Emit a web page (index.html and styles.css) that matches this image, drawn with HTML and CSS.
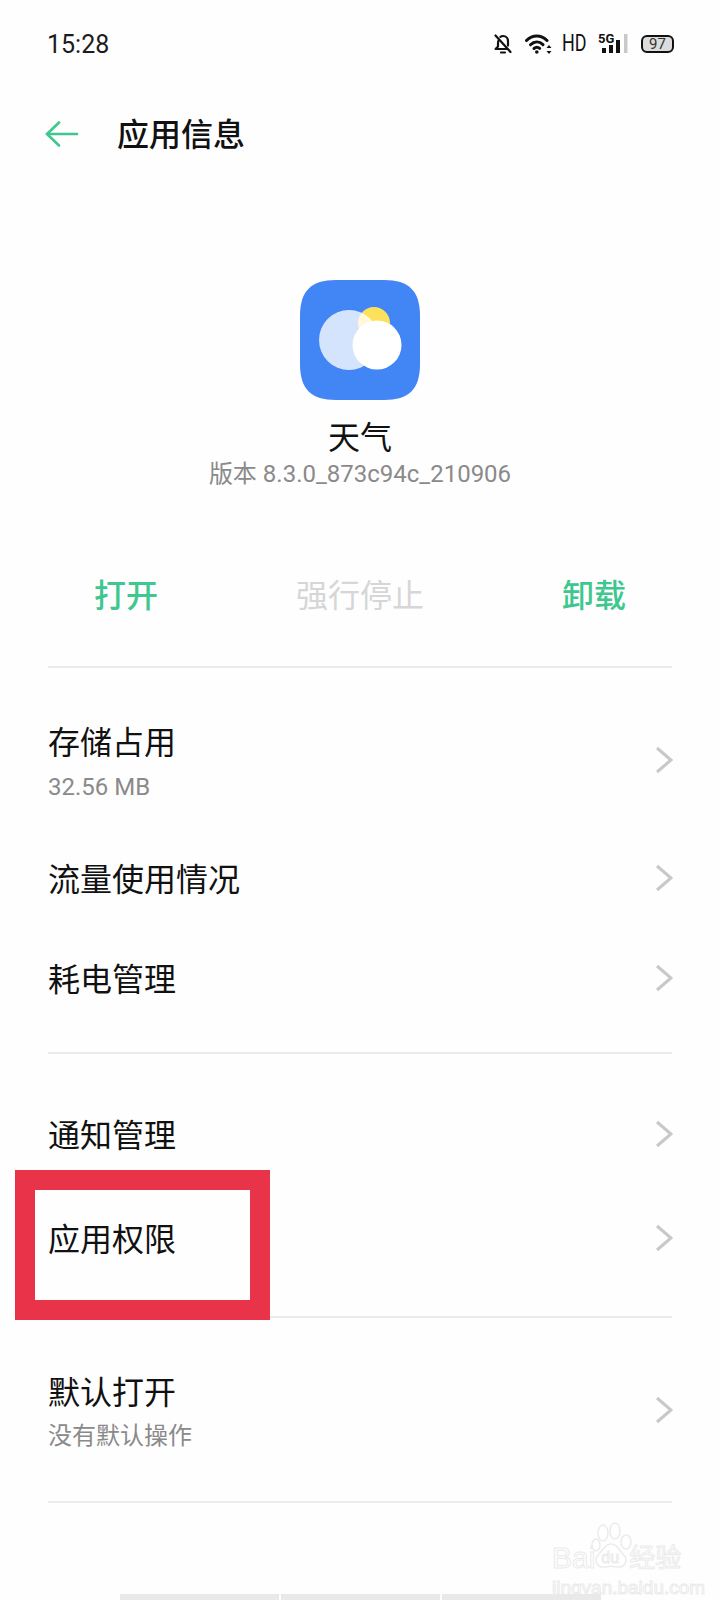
FILE: index.html
```html
<!DOCTYPE html>
<html lang="zh-CN">
<head>
    <meta charset="UTF-8">
    <meta name="viewport" content="width=device-width, initial-scale=1.0">
    <title>应用信息</title>
    <link rel="stylesheet" href="styles.css">
</head>
<body>
    <div class="page">
        <!-- Status bar -->
        <div class="status-bar">
            <span class="time">15:28</span>
            <div class="status-icons">
                <svg class="icon-bell" width="18" height="20" viewBox="0 0 18 20" fill="none" stroke="#111" stroke-width="2.200" stroke-linecap="round" stroke-linejoin="round">
                    <path d="M4.600 6.400C4.200 7.200 4 8 4 9v3.400L1.600 15h11.600"/>
                    <path d="M6.400 2.900C7.200 2.300 8 2 9 2c3 0 5 2.300 5 5.200v4.400"/>
                    <path d="M1.500 1.500 16.500 18"/>
                    <path d="M7 18.500h4"/>
                </svg>
                <svg class="icon-wifi" width="27" height="20" viewBox="0 0 27 20" fill="none" stroke="#111" stroke-width="3" stroke-linecap="round">
                    <path d="M1.500 6.500C7.500 .5 16 .5 22 6.500"/>
                    <path d="M5.500 10.800C9.300 7 14.300 7 18 10.600"/>
                    <path d="M9 14.500c1.800-1.500 4-1.500 5.700-.1"/>
                    <circle cx="11.800" cy="18" r="1.800" fill="#111" stroke="none"/>
                    <path d="M24 11l-2.500 3h5zM24 20l-2.500-3h5z" fill="#111" stroke="none"/>
                </svg>
                <span class="hd">HD</span>
                <div class="signal">
                    <span class="five-g">5G</span>
                    <svg width="26" height="20" viewBox="0 0 26 20">
                        <rect x="0" y="14" width="4" height="5" fill="#111"/>
                        <rect x="7" y="11" width="4" height="8" fill="#111"/>
                        <rect x="14" y="6" width="4" height="13" fill="#111"/>
                        <rect x="22" y="0" width="3.500" height="19" fill="#c9c9c9"/>
                    </svg>
                </div>
                <div class="battery"><span>97</span></div>
            </div>
        </div>

        <!-- Title bar -->
        <div class="toolbar">
            <svg class="back" width="34" height="26" viewBox="0 0 34 26" fill="none" stroke="#3fc78f" stroke-width="2.600" stroke-linecap="round" stroke-linejoin="round">
                <path d="M2 13h30"/>
                <path d="M14 1.500 2 13l12 11.500"/>
            </svg>
            <h1 class="title">应用信息</h1>
        </div>

        <!-- App header -->
        <div class="app-info">
            <svg class="app-icon" width="120" height="120" viewBox="0 0 120 120">
                <path d="M36 0h48c25 0 36 11 36 36v48c0 25-11 36-36 36H36C11 120 0 109 0 84V36C0 11 11 0 36 0z" fill="#4285f4"/>
                <circle cx="74" cy="43" r="16" fill="#fde05c"/>
                <circle cx="49" cy="60" r="30" fill="#fff" fill-opacity="0.78"/>
                <circle cx="77" cy="65" r="24.500" fill="#fff"/>
            </svg>
            <div class="app-name">天气</div>
            <div class="app-version">版本 8.3.0_873c94c_210906</div>
        </div>

        <!-- Actions -->
        <div class="actions">
            <span class="action">打开</span>
            <span class="action action-disabled">强行停止</span>
            <span class="action">卸载</span>
        </div>

        <div class="group group-storage">
            <div class="row row-storage">
                <div>
                    <div class="row-title">存储占用</div>
                    <div class="row-sub">32.56 MB</div>
                </div>
                <svg class="chevron" width="18" height="28" viewBox="0 0 18 28"><path d="M2 2l14 12L2 26"/></svg>
            </div>
            <div class="row">
                <div class="row-title">流量使用情况</div>
                <svg class="chevron" width="18" height="28" viewBox="0 0 18 28"><path d="M2 2l14 12L2 26"/></svg>
            </div>
            <div class="row">
                <div class="row-title">耗电管理</div>
                <svg class="chevron" width="18" height="28" viewBox="0 0 18 28"><path d="M2 2l14 12L2 26"/></svg>
            </div>
        </div>

        <div class="group group-manage">
            <div class="row row-tall">
                <div class="row-title">通知管理</div>
                <svg class="chevron" width="18" height="28" viewBox="0 0 18 28"><path d="M2 2l14 12L2 26"/></svg>
            </div>
            <div class="row row-tall">
                <div class="row-title">应用权限</div>
                <svg class="chevron" width="18" height="28" viewBox="0 0 18 28"><path d="M2 2l14 12L2 26"/></svg>
            </div>
        </div>

        <div class="group group-default">
            <div class="row row-default">
                <div>
                    <div class="row-title">默认打开</div>
                    <div class="row-sub">没有默认操作</div>
                </div>
                <svg class="chevron" width="18" height="28" viewBox="0 0 18 28"><path d="M2 2l14 12L2 26"/></svg>
            </div>
        </div>

        <!-- Red highlight drawn over the screenshot -->
        <div class="highlight"></div>

        <!-- Watermark -->
        <div class="watermark">
            <div class="wm-logo">
                <span>Bai</span>
                <div class="wm-paw">
                    <svg width="42" height="54" viewBox="0 0 42 54" fill="#fff" stroke="#ebebeb" stroke-width="1.500">
                        <ellipse cx="12" cy="11" rx="5" ry="8"/>
                        <ellipse cx="24" cy="9" rx="5" ry="8"/>
                        <ellipse cx="35" cy="20" rx="5" ry="7"/>
                        <ellipse cx="5" cy="23" rx="4" ry="6"/>
                        <path d="M20 22c6 0 8 6 12 10 6 6 2 14-6 13-4-1-8-1-12 0-8 1-12-7-6-13 4-4 6-10 12-10z"/>
                    </svg>
                    <span class="wm-du">du</span>
                </div>
                <span>经验</span>
            </div>
            <div class="wm-url">jingyan.baidu.com</div>
        </div>

        <div class="bottom-bar">
            <span></span>
            <span></span>
            <span></span>
        </div>
    </div>
</body>
</html>
```

FILE: styles.css
```css
* {
    box-sizing: border-box;
}

body {
    margin: 0;
    background-color: #fff;
    font-family: "Noto Sans CJK SC", "Noto Sans", sans-serif;
    color: #111;
}

.page {
    position: relative;
    width: 720px;
    height: 1600px;
    overflow: hidden;
    background-color: #fefefe;
}

.status-bar {
    display: flex;
    align-items: center;
    justify-content: space-between;
    height: 88px;
    padding: 0 46px 0 47px;
}

.time {
    font-family: Roboto, sans-serif;
    font-size: 25px;
    color: #1c1c1c;
}

.status-icons {
    display: flex;
    align-items: center;
}

.icon-wifi {
    margin-left: 13px;
}

.hd {
    display: inline-block;
    width: 24px;
    margin-left: 10px;
    font-family: Roboto, sans-serif;
    font-size: 23px;
    line-height: 20px;
    transform: scaleX(0.78);
    transform-origin: left center;
}

.signal {
    position: relative;
    margin-left: 12px;
    width: 30px;
    height: 20px;
    display: flex;
    justify-content: flex-end;
}

.five-g {
    position: absolute;
    left: 0;
    top: -2px;
    font-family: Roboto, sans-serif;
    font-size: 13px;
    font-weight: 700;
    line-height: 13px;
}

.battery {
    display: flex;
    align-items: center;
    justify-content: center;
    margin-left: 13px;
    width: 33px;
    height: 18px;
    border: 2px solid #111;
    border-radius: 6px;
    background-color: #dcdcdc;
    font-family: Roboto, sans-serif;
    font-size: 15px;
    line-height: 14px;
    color: #333;
}

.toolbar {
    display: flex;
    align-items: center;
    height: 94px;
    padding-left: 45px;
}

.back {
    margin-bottom: 2px;
}

.title {
    margin: 0 0 6px 38px;
    font-size: 32px;
    font-weight: 500;
    line-height: 46px;
}

.app-info {
    display: flex;
    flex-direction: column;
    align-items: center;
    padding-top: 98px;
}

.app-icon {
    display: block;
}

.app-name {
    margin-top: 12px;
    font-size: 32px;
    line-height: 46px;
}

.app-version {
    font-family: Roboto, "Noto Sans CJK SC", sans-serif;
    font-size: 24px;
    line-height: 32px;
    color: #8a8a8a;
}

.actions {
    display: grid;
    grid-template-columns: 1fr 1fr 1fr;
    margin: 0 48px;
    padding-top: 80px;
    height: 178px;
    text-align: center;
    font-size: 32px;
    line-height: 46px;
    font-weight: 500;
    color: #3fc78f;
    border-bottom: 2px solid #ececec;
}

.action:first-child {
    text-align: left;
    padding-left: 46px;
}

.action:last-child {
    text-align: right;
    padding-right: 46px;
}

.action-disabled {
    font-weight: 400;
    color: #d6d6d6;
}

.group {
    margin: 0 48px;
    border-bottom: 2px solid #ececec;
}

.group-storage {
    height: 386px;
    padding-top: 27px;
}

.group-manage {
    height: 264px;
    padding-top: 28px;
}

.group-default {
    height: 185px;
}

.row {
    display: flex;
    align-items: center;
    justify-content: space-between;
    height: 100px;
}

.row-storage {
    height: 133px;
    padding-bottom: 3px;
}

.row-tall {
    height: 104px;
}

.row-default {
    height: 183px;
}

.row-title {
    padding-bottom: 3px;
    font-size: 32px;
    line-height: 46px;
    color: #111;
}

.row-sub {
    margin-top: 4px;
    font-family: Roboto, "Noto Sans CJK SC", sans-serif;
    font-size: 24px;
    line-height: 34px;
    color: #8a8a8a;
}

.row-default .row-sub {
    margin-top: 3px;
}

.chevron {
    margin-right: -1px;
    fill: none;
    stroke: #c8c8c8;
    stroke-width: 3;
}

.highlight {
    position: absolute;
    left: 15px;
    top: 1170px;
    width: 255px;
    height: 150px;
    border: 20px solid #e93348;
}

.watermark {
    position: absolute;
    left: 552px;
    top: 1522px;
    color: #fff;
    -webkit-text-stroke: 1px #ebebeb;
}

.wm-logo {
    display: flex;
    align-items: flex-end;
    font-family: "Liberation Sans", "Noto Sans CJK SC", sans-serif;
    font-size: 30px;
    line-height: 36px;
}

.wm-logo > span:last-child {
    font-size: 26px;
}

.wm-paw {
    position: relative;
    margin: 0 -4px;
    height: 54px;
}

.wm-du {
    position: absolute;
    left: 10px;
    bottom: 9px;
    font-size: 16px;
    line-height: 18px;
}

.wm-url {
    font-family: "Liberation Sans", sans-serif;
    font-size: 19px;
    line-height: 24px;
}

.bottom-bar {
    position: absolute;
    left: 120px;
    bottom: 0;
    display: flex;
    gap: 2px;
    height: 6px;
}

.bottom-bar span {
    width: 159px;
    background-color: #e9e9e9;
}
```
